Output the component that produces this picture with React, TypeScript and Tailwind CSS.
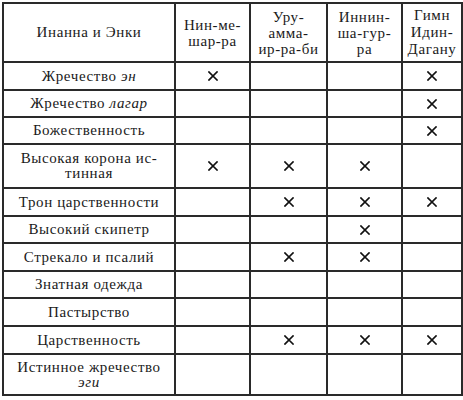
type Row = {
  label: React.ReactNode;
  marks: boolean[];
  h: string;
};

function Cross() {
  return (
    <svg width="10" height="10" viewBox="0 0 10 10" className="mx-auto block">
      <path d="M1 1 L9 9 M9 1 L1 9" stroke="#111" strokeWidth="1.7" strokeLinecap="square" />
    </svg>
  );
}

const rows: Row[] = [
  { label: <>Жречество <i>эн</i></>, marks: [true, false, false, true], h: "h-[28px]" },
  { label: <>Жречество <i>лагар</i></>, marks: [false, false, false, true], h: "h-[27px]" },
  { label: "Божественность", marks: [false, false, false, true], h: "h-[27px]" },
  { label: <>Высокая корона ис-<br />тинная</>, marks: [true, true, true, false], h: "h-[44px]" },
  { label: "Трон царственности", marks: [false, true, true, true], h: "h-[28px]" },
  { label: "Высокий скипетр", marks: [false, false, true, false], h: "h-[27px]" },
  { label: "Стрекало и псалий", marks: [false, true, true, false], h: "h-[28px]" },
  { label: "Знатная одежда", marks: [false, false, false, false], h: "h-[27px]" },
  { label: "Пастырство", marks: [false, false, false, false], h: "h-[28px]" },
  { label: "Царственность", marks: [false, true, true, true], h: "h-[28px]" },
  { label: <>Истинное жречество<br /><i>эги</i></>, marks: [false, false, false, false], h: "h-[41px]" },
];

export default function App() {
  const cell = "border-2 border-[#2a2a2a] text-center align-middle p-0";
  return (
    <div className="w-[463px] h-[400px] bg-white pl-[2px] pt-[2px] font-serif text-[15px] leading-[15px] tracking-[0.6px] text-[#1a1a1a]">
      <table className="table-fixed border-collapse w-[459px] border-2 border-[#1a1a1a] [font-family:Liberation_Serif,serif]">
        <colgroup>
          <col className="w-[172px]" />
          <col className="w-[75px]" />
          <col className="w-[77px]" />
          <col className="w-[75px]" />
          <col className="w-[60px]" />
        </colgroup>
        <thead>
          <tr className="h-[59px]">
            <th className={`${cell} font-normal`}>Инанна и Энки</th>
            <th className={`${cell} font-normal leading-[16px]`}>Нин-ме-<br />шар-ра</th>
            <th className={`${cell} font-normal leading-[16px]`}>Уру-<br />амма-<br />ир-ра-би</th>
            <th className={`${cell} font-normal leading-[16px]`}>Иннин-<br />ша-гур-<br />ра</th>
            <th className={`${cell} font-normal leading-[17px]`}>Гимн<br />Идин-<br />Дагану</th>
          </tr>
        </thead>
        <tbody>
          {rows.map((r, i) => (
            <tr key={i} className={r.h}>
              <td className={`${cell} px-2`}>{r.label}</td>
              {r.marks.map((m, j) => (
                <td key={j} className={cell}>
                  {m ? <Cross /> : null}
                </td>
              ))}
            </tr>
          ))}
        </tbody>
      </table>
    </div>
  );
}
